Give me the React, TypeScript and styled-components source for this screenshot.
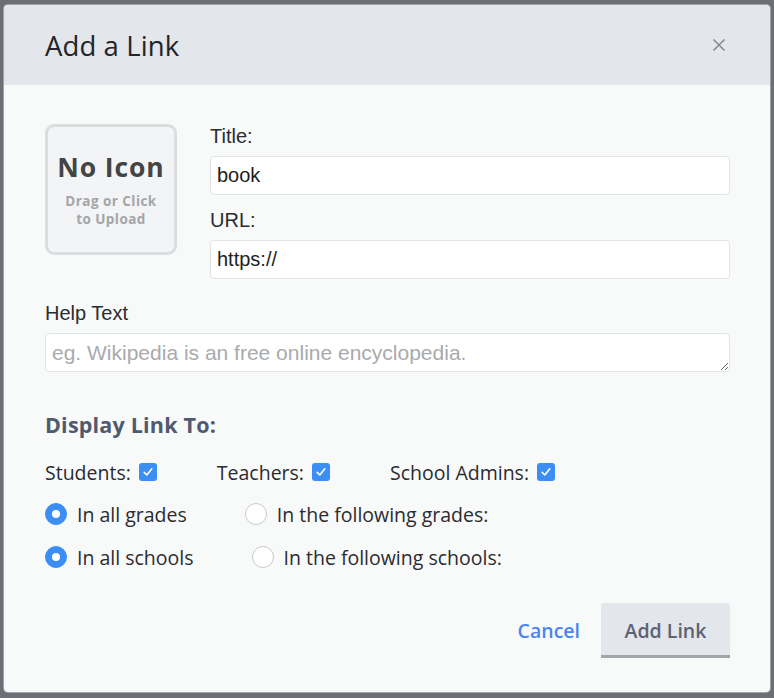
import React from "react";
import styled, { createGlobalStyle } from "styled-components";

const Global = createGlobalStyle`
  html, body { margin: 0; padding: 0; }
  body {
    background: #6d6e76;
    font-family: "Open Sans", Lato, sans-serif;
  }
  * { box-sizing: border-box; }
`;

const Page = styled.div`
  padding: 5px 4px 6px 4px;
  width: 774px;
  height: 698px;
`;

const Modal = styled.div`
  width: 766px;
  height: 687px;
  background: #f8f9f9;
  border-radius: 4px;
  overflow: hidden;
  display: flex;
  flex-direction: column;
  box-shadow: 0 0 0 1px rgba(255, 255, 255, 0.35);
`;

const Header = styled.div`
  height: 80px;
  background: #e3e6ea;
  display: flex;
  align-items: center;
  justify-content: space-between;
  padding: 0 44px 0 41px;
  flex-shrink: 0;
`;

const Title = styled.h1`
  margin: 0;
  font-family: "Open Sans", sans-serif;
  font-weight: 400;
  font-size: 27.5px;
  color: #222428;
  letter-spacing: 0.1px;
`;

const CloseButton = styled.button`
  border: 0;
  background: transparent;
  padding: 0;
  width: 14px;
  height: 14px;
  display: flex;
  cursor: pointer;
`;

const Body = styled.div`
  flex: 1;
  padding: 39px 40px 0 41px;
  display: flex;
  flex-direction: column;
`;

const TopRow = styled.div`
  display: flex;
  gap: 33px;
`;

const IconDrop = styled.div`
  width: 132px;
  height: 131px;
  flex-shrink: 0;
  border: 3px solid #dcdddf;
  border-radius: 9px;
  background: #f3f4f6;
  display: flex;
  flex-direction: column;
  align-items: center;
  justify-content: center;
  padding-bottom: 1px;
`;

const NoIcon = styled.div`
  font-family: "Open Sans", sans-serif;
  font-weight: 700;
  font-size: 26.5px;
  letter-spacing: 0.9px;
  color: #434446;
  line-height: 32px;
`;

const DropHint = styled.div`
  margin-top: 9px;
  font-family: "Open Sans", sans-serif;
  font-weight: 700;
  font-size: 13.5px;
  line-height: 18px;
  letter-spacing: 0.45px;
  color: #a4a5a8;
  text-align: center;
`;

const Fields = styled.div`
  flex: 1;
  display: flex;
  flex-direction: column;
`;

const Label = styled.label<{ $top?: number }>`
  display: block;
  font-family: "Liberation Sans", Arial, sans-serif;
  font-size: 20px;
  line-height: 24px;
  color: #2a2c30;
  margin-top: ${(p) => p.$top ?? 0}px;
  margin-bottom: 8px;
`;

const TextInput = styled.input`
  display: block;
  width: 100%;
  height: 39px;
  border: 1px solid #e1e4e8;
  border-radius: 4px;
  background: #fff;
  padding: 0 6px;
  font-family: "Liberation Sans", Arial, sans-serif;
  font-size: 20px;
  color: #1d1e20;
  outline: none;
`;

const HelpArea = styled.textarea`
  display: block;
  width: 100%;
  height: 39px;
  border: 1px solid #e1e4e8;
  border-radius: 4px;
  background: #fff;
  padding: 6px 6px;
  font-family: "Liberation Sans", Arial, sans-serif;
  font-size: 21px;
  line-height: 25px;
  color: #1d1e20;
  outline: none;
  resize: vertical;
  &::placeholder { color: #a9aaad; }
`;

const SectionTitle = styled.h2`
  margin: 41px 0 0 0;
  font-family: "Open Sans", sans-serif;
  font-weight: 700;
  font-size: 21.5px;
  letter-spacing: 0.2px;
  line-height: 24px;
  color: #4f5a6e;
`;

const OptionRow = styled.div<{ $top: number; $gap: number }>`
  display: flex;
  align-items: center;
  height: 26px;
  margin-top: ${(p) => p.$top}px;
  gap: ${(p) => p.$gap}px;
`;

const Option = styled.label`
  display: flex;
  align-items: center;
  gap: 8px;
  font-family: "Open Sans", sans-serif;
  font-size: 19.5px;
  color: #2a2c30;
`;

const RadioOption = styled(Option)`
  gap: 10px;
`;

const CheckBox = styled.span`
  width: 18px;
  height: 18px;
  border-radius: 3px;
  background: #3b8ef4;
  display: inline-flex;
  align-items: center;
  justify-content: center;
`;

const Radio = styled.span<{ $on?: boolean }>`
  width: 22px;
  height: 22px;
  border-radius: 50%;
  flex-shrink: 0;
  background: ${(p) => (p.$on ? "#3b8ef4" : "#fff")};
  border: 1px solid ${(p) => (p.$on ? "#3b8ef4" : "#c9cacd")};
  display: inline-flex;
  align-items: center;
  justify-content: center;
  &::after {
    content: "";
    width: 8px;
    height: 8px;
    border-radius: 50%;
    background: #fff;
    display: ${(p) => (p.$on ? "block" : "none")};
  }
`;

const Footer = styled.div`
  margin-top: auto;
  margin-bottom: 34px;
  display: flex;
  justify-content: flex-end;
  align-items: center;
  gap: 21px;
`;

const CancelButton = styled.button`
  border: 0;
  background: transparent;
  padding: 0;
  font-family: "Open Sans", sans-serif;
  font-weight: 600;
  font-size: 19.5px;
  color: #4a86ef;
  cursor: pointer;
`;

const PrimaryButton = styled.button`
  width: 129px;
  height: 55px;
  border: 0;
  border-bottom: 3px solid #a3a5aa;
  border-radius: 3px 3px 0 0;
  background: #e3e6ea;
  font-family: "Open Sans", sans-serif;
  font-weight: 600;
  font-size: 19.5px;
  color: #5b6375;
  cursor: pointer;
  padding-top: 3px;
`;

const Check = () => (
  <CheckBox>
    <svg width="12" height="12" viewBox="0 0 12 12">
      <path d="M2.2 6.4 L4.8 9 L9.8 2.8" fill="none" stroke="#fff" strokeWidth="1.6" strokeLinecap="round" strokeLinejoin="round" />
    </svg>
  </CheckBox>
);

export default function App() {
  return (
    <>
      <Global />
      <Page>
        <Modal>
          <Header>
            <Title>Add a Link</Title>
            <CloseButton aria-label="Close">
              <svg width="14" height="14" viewBox="0 0 14 14">
                <path d="M1.5 1.5 L12.5 12.5 M12.5 1.5 L1.5 12.5" stroke="#8a8b8f" strokeWidth="1.6" />
              </svg>
            </CloseButton>
          </Header>
          <Body>
            <TopRow>
              <IconDrop>
                <NoIcon>No Icon</NoIcon>
                <DropHint>
                  Drag or Click
                  <br />
                  to Upload
                </DropHint>
              </IconDrop>
              <Fields>
                <Label>Title:</Label>
                <TextInput defaultValue="book" />
                <Label $top={13}>URL:</Label>
                <TextInput defaultValue="https://" />
              </Fields>
            </TopRow>
            <Label $top={22}>Help Text</Label>
            <HelpArea placeholder="eg. Wikipedia is an free online encyclopedia." />
            <SectionTitle>Display Link To:</SectionTitle>
            <OptionRow $top={22} $gap={60}>
              <Option>
                Students: <Check />
              </Option>
              <Option>
                Teachers: <Check />
              </Option>
              <Option>
                School Admins: <Check />
              </Option>
            </OptionRow>
            <OptionRow $top={16} $gap={58}>
              <RadioOption>
                <Radio $on />
                In all grades
              </RadioOption>
              <RadioOption>
                <Radio />
                In the following grades:
              </RadioOption>
            </OptionRow>
            <OptionRow $top={17} $gap={58}>
              <RadioOption>
                <Radio $on />
                In all schools
              </RadioOption>
              <RadioOption>
                <Radio />
                In the following schools:
              </RadioOption>
            </OptionRow>
            <Footer>
              <CancelButton>Cancel</CancelButton>
              <PrimaryButton>Add Link</PrimaryButton>
            </Footer>
          </Body>
        </Modal>
      </Page>
    </>
  );
}
